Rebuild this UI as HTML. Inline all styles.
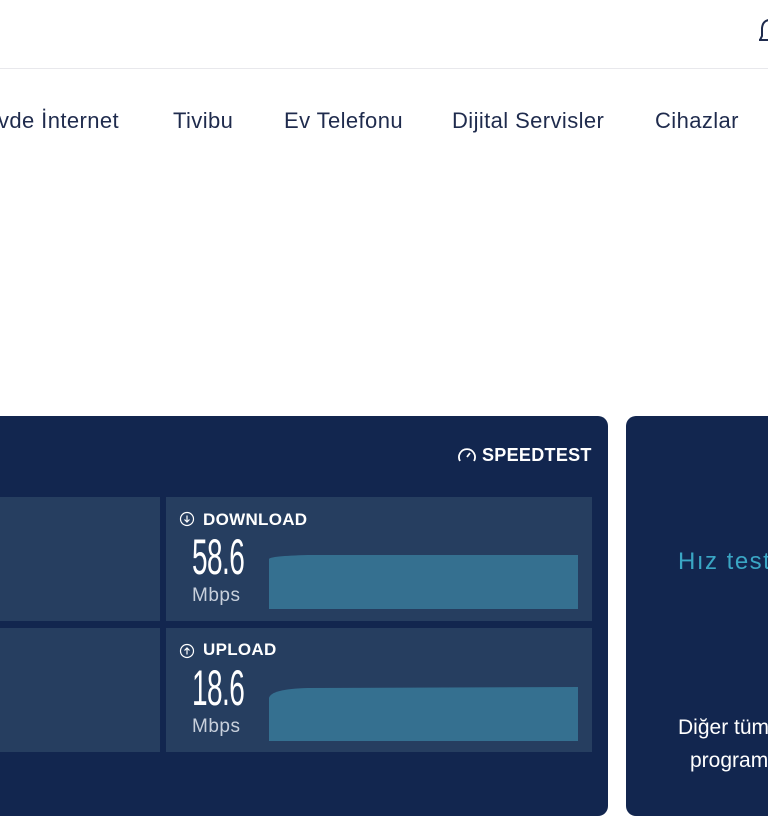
<!DOCTYPE html>
<html><head><meta charset="utf-8"><style>
*{margin:0;padding:0;box-sizing:border-box}
body{width:768px;height:768px;overflow:hidden;background:#fff;font-family:"Liberation Sans","DejaVu Sans",sans-serif;position:relative}
.a{position:absolute}
.nav{top:108px;font-size:22px;letter-spacing:0.4px;color:#1f2b4d;white-space:nowrap}
.panel{left:-20px;top:416px;width:628px;height:400px;background:#12264f;border-radius:10px}
.cell{background:#263e60}
.lbl{color:#fff;font-weight:bold;font-size:17px;letter-spacing:0.3px;white-space:nowrap}
.num{color:#fff;font-size:50px;font-family:"Liberation Sans Narrow","Liberation Sans",sans-serif;transform:scaleX(0.56);transform-origin:left top;letter-spacing:-1px}
.unit{color:#c8d0dc;font-size:19px;letter-spacing:0.5px}
</style></head><body>
<div class="a" style="left:0;top:68px;width:768px;height:1px;background:#e8e8ec"></div>
<svg class="a" style="left:756px;top:16px" width="20" height="30" viewBox="0 0 20 30"><path d="M4 24 L6 20 L6 12 Q7 4 14 4" fill="none" stroke="#1f2b4d" stroke-width="2"/><path d="M3 24 L14 24" stroke="#1f2b4d" stroke-width="2"/></svg>
<div class="a nav" style="left:-2px">vde İnternet</div>
<div class="a nav" style="left:173px">Tivibu</div>
<div class="a nav" style="left:284px">Ev Telefonu</div>
<div class="a nav" style="left:452px">Dijital Servisler</div>
<div class="a nav" style="left:655px">Cihazlar</div>

<div class="a panel"></div>
<svg class="a" style="left:457px;top:446px" width="20" height="18" viewBox="0 0 20 18"><path d="M3 15 A8 8 0 1 1 17 15" fill="none" stroke="#fff" stroke-width="1.8"/><path d="M10 11 L13 7" stroke="#fff" stroke-width="1.8"/></svg>
<div class="a lbl" style="left:482px;top:445px;font-size:18px">SPEEDTEST</div>

<div class="a cell" style="left:0;top:497px;width:160px;height:124px"></div>
<div class="a cell" style="left:0;top:628px;width:160px;height:124px"></div>
<div class="a cell" style="left:166px;top:497px;width:426px;height:124px"></div>
<div class="a cell" style="left:166px;top:628px;width:426px;height:124px"></div>

<svg class="a" style="left:179px;top:511px" width="16" height="16" viewBox="0 0 16 16"><circle cx="8" cy="8" r="6.5" fill="none" stroke="#fff" stroke-width="1.2"/><path d="M8 4.5 V11 M5.5 8.5 L8 11 L10.5 8.5" fill="none" stroke="#fff" stroke-width="1.2"/></svg>
<div class="a lbl" style="left:203px;top:510px">DOWNLOAD</div>
<div class="a num" style="left:192px;top:528px">58.6</div>
<div class="a unit" style="left:192px;top:585px">Mbps</div>
<svg class="a" style="left:268px;top:554px" width="310" height="55"><path d="M1 55 L1 5 Q2 2 40 1 L310 1 L310 55 Z" fill="#357090"/></svg>

<svg class="a" style="left:179px;top:643px" width="16" height="16" viewBox="0 0 16 16"><circle cx="8" cy="8" r="6.5" fill="none" stroke="#fff" stroke-width="1.2"/><path d="M8 11.5 V5 M5.5 7.5 L8 5 L10.5 7.5" fill="none" stroke="#fff" stroke-width="1.2"/></svg>
<div class="a lbl" style="left:203px;top:640px">UPLOAD</div>
<div class="a num" style="left:192px;top:659px">18.6</div>
<div class="a unit" style="left:192px;top:716px">Mbps</div>
<svg class="a" style="left:268px;top:686px" width="310" height="55"><path d="M1 55 L1 12 Q3 3 40 2 L310 1 L310 55 Z" fill="#357090"/></svg>

<div class="a" style="left:626px;top:416px;width:160px;height:400px;background:#12264f;border-radius:10px"></div>
<div class="a" style="left:678px;top:548px;font-size:24px;color:#3aa6c4;letter-spacing:1.5px;white-space:nowrap">Hız testi</div>
<div class="a" style="left:678px;top:716px;font-size:21px;color:#fff;white-space:nowrap">Diğer tüm</div>
<div class="a" style="left:690px;top:749px;font-size:21px;color:#fff;white-space:nowrap">program</div>
</body></html>
